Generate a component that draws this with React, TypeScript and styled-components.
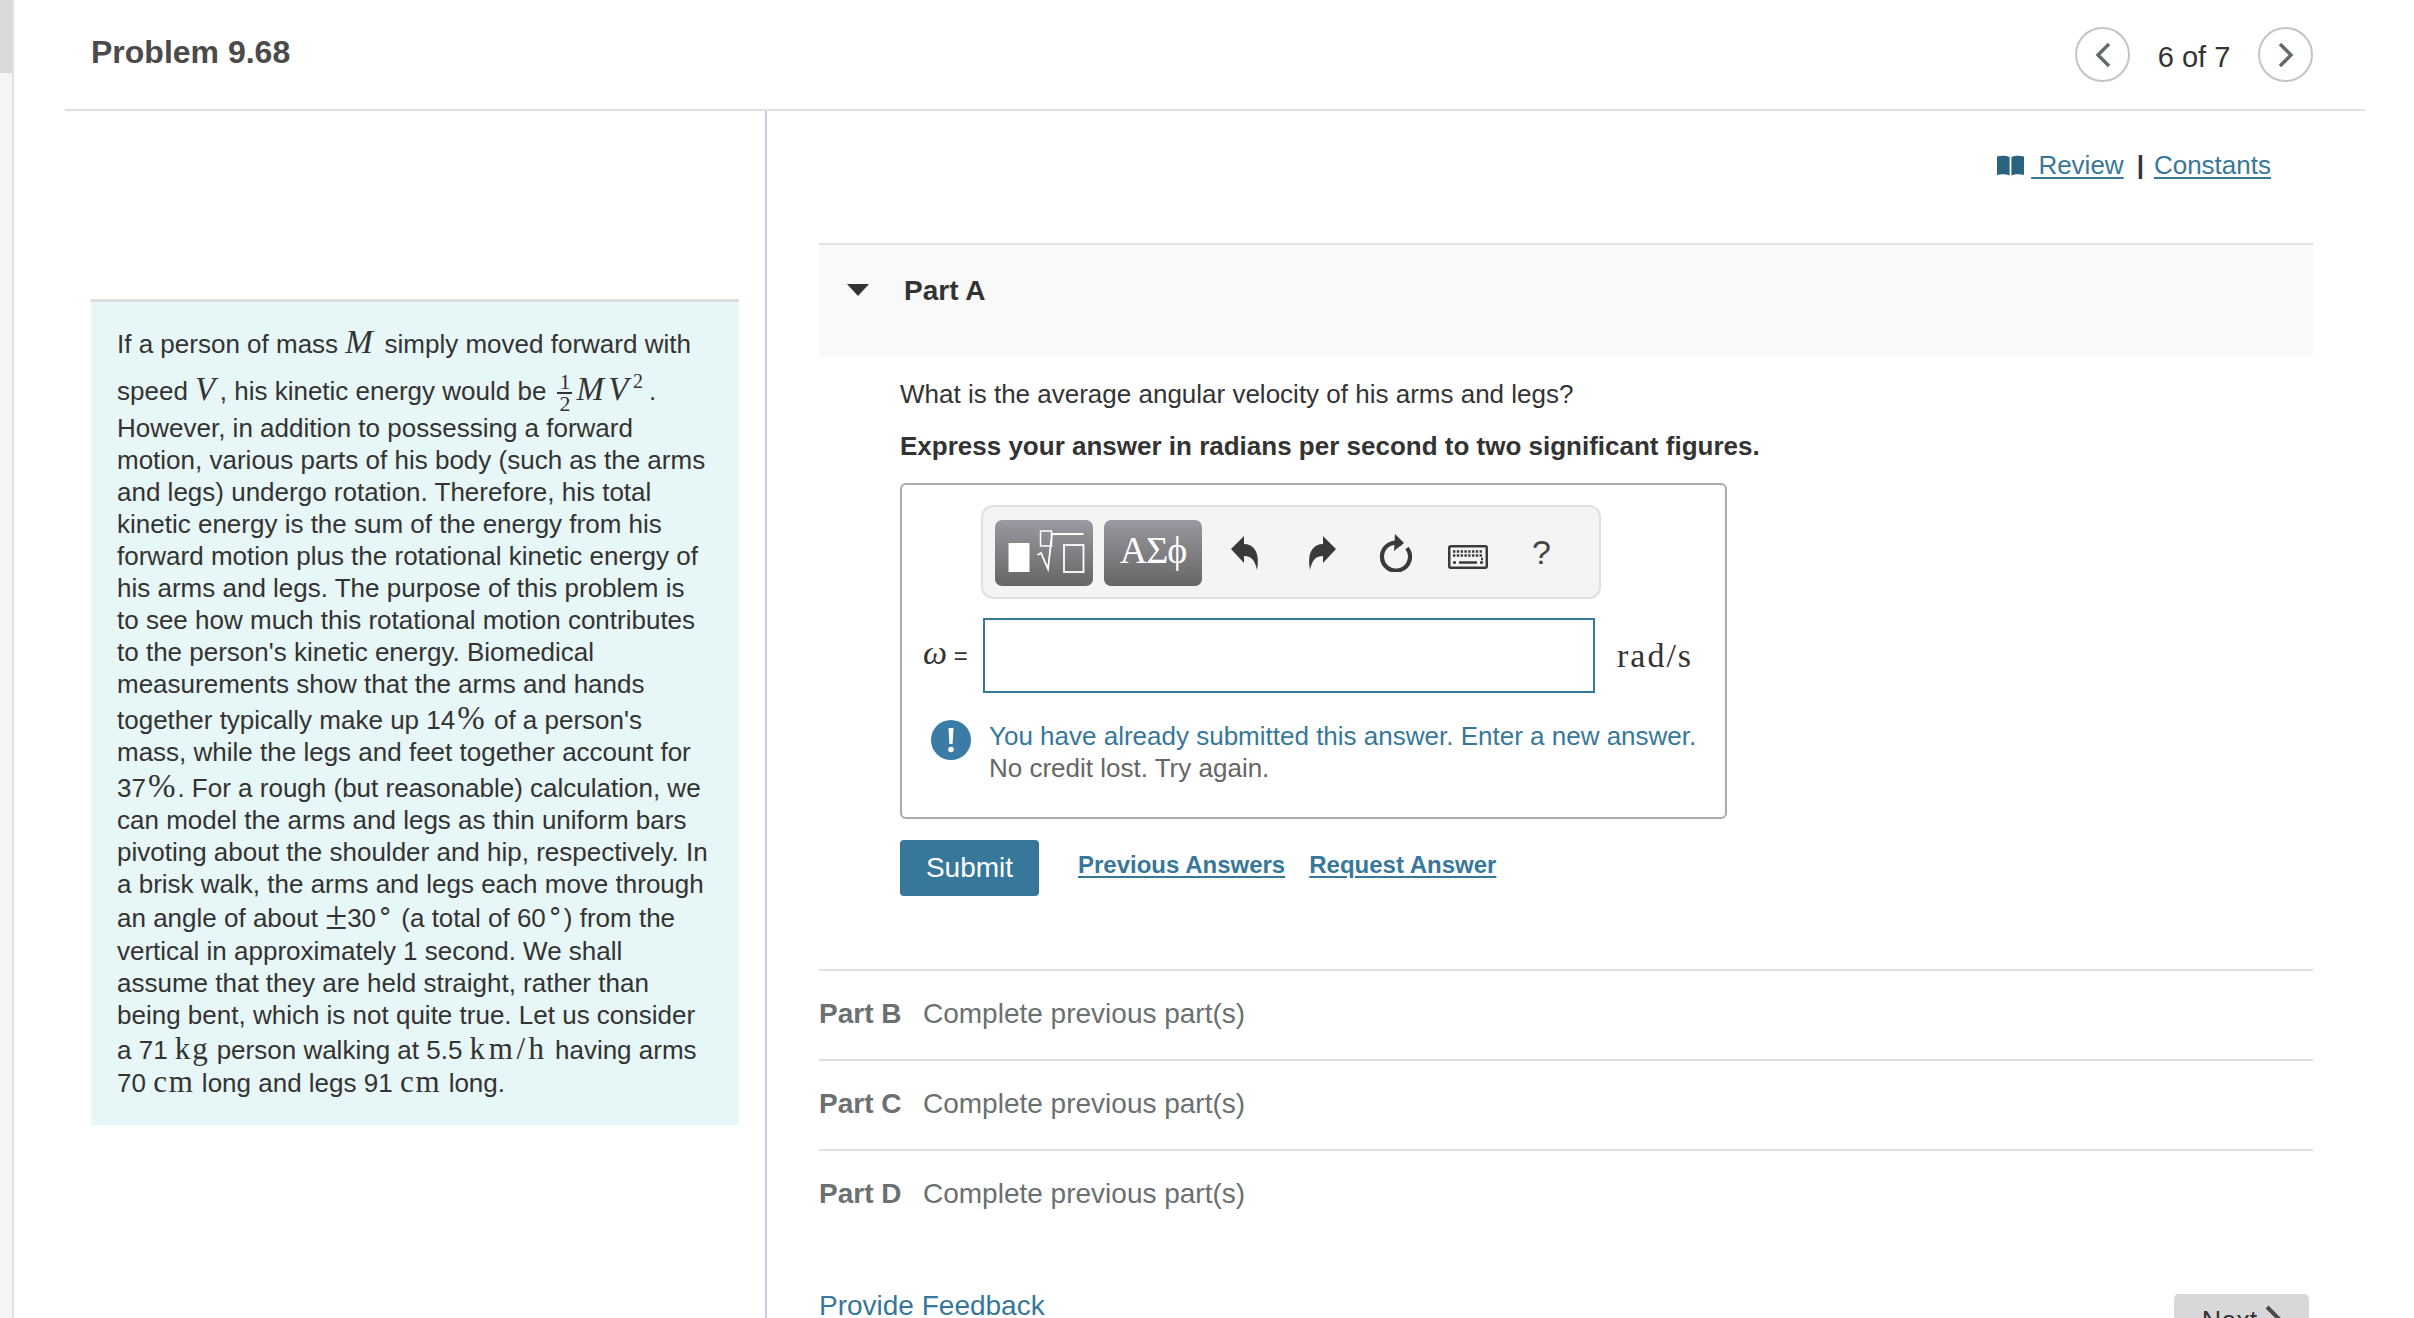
import React from "react";
import styled, { createGlobalStyle } from "styled-components";

const Global = createGlobalStyle`
  html, body { margin: 0; padding: 0; height: 1318px; overflow: hidden; background: #fff; }
  body { font-family: "Liberation Sans", Arial, sans-serif; color: #333; }
  #root { height: 1318px; overflow: hidden; }
`;

const Page = styled.div`display: flex; height: 1318px; overflow: hidden;`;
const Strip = styled.div`
  width: 12px; border-right: 2px solid #e2e2e2; background: #f5f5f5; flex: none;
  &::before { content: ""; display: block; height: 73px; background: #d9d9d9; }
`;
const Main = styled.div`flex: 1; padding: 0 49px 0 51px; min-width: 0;`;
const Header = styled.header`
  height: 109px; border-bottom: 2px solid #e0e0e0; box-sizing: content-box;
  display: flex; align-items: flex-start; justify-content: space-between; padding: 0 52px 0 26px;
`;
const Title = styled.h1`margin: 34px 0 0; font-size: 32px; line-height: 36px; font-weight: 700; color: #4a4a4a;`;
const Pager = styled.div`display: flex; align-items: center; margin-top: 27px; font-size: 29px; color: #333;`;
const PagerCount = styled.span`width: 128px; text-align: center; position: relative; top: 3px;`;
const Circle = styled.div`
  width: 55px; height: 55px; box-sizing: border-box; border: 2px solid #c4c4c4; border-radius: 50%;
  display: flex; align-items: center; justify-content: center;
`;
const Body = styled.div`display: flex; height: 1207px;`;
const LeftCol = styled.div`
  flex: none; border-right: 2px solid #c3d0e0; padding: 188px 0 0 26px; width: 674px;
`;
const Panel = styled.section`
  width: 648px; box-sizing: border-box; background: #e7f6f6; border-top: 3px solid #dedede;
  padding: 26px 0 26px 26px; font-size: 26px; color: #333;
`;
const Line = styled.div<{ $gap?: number }>`
  height: 32px; line-height: 32px; white-space: nowrap; margin-top: ${(p) => p.$gap ?? 0}px;
`;
const MathI = styled.i<{ $sp?: number }>`
  font-family: "Liberation Serif", serif; font-size: 33px; line-height: 0; letter-spacing: ${(p) => p.$sp ?? 2.5}px;
`;
const MathR = styled.span<{ $sp?: number }>`
  font-family: "Liberation Serif", serif; font-size: 31px; line-height: 0; letter-spacing: ${(p) => p.$sp ?? 1.8}px;
`;
const Sup = styled.sup`font-family: "Liberation Serif", serif; font-size: 20px; line-height: 0; vertical-align: 12px; margin-right: 6px;`;
const Degree = styled.sup`font-family: "Liberation Serif", serif; font-size: 26px; line-height: 0; vertical-align: 8px; margin: 0 1px;`;
const Pct = styled.span`font-family: "Liberation Serif", serif; font-size: 33px; line-height: 0; margin: 0 2px;`;
const PlusMinus = styled.span`font-family: "Liberation Serif", serif; font-size: 40px; line-height: 0; font-weight: 400; position: relative; top: 2px;`;
const Frac = styled.span`
  display: inline-flex; flex-direction: column; align-items: center; vertical-align: middle;
  font-family: "Liberation Serif", serif; font-size: 22px; line-height: 20px; margin: 0 4px 0 11px;
  position: relative; top: -1px; height: 40px;
`;
const FracTop = styled.span`border-bottom: 2px solid #333; padding: 0 2px; height: 20px;`;
const FracBottom = styled.span`height: 20px;`;

const RightCol = styled.div`flex: 1; padding: 0 52px; min-width: 0;`;
const TopLinks = styled.div`
  height: 132px; box-sizing: border-box; padding: 38px 42px 0 0; display: flex; justify-content: flex-end;
  align-items: flex-start; font-size: 26px; line-height: 32px;
`;
const Link = styled.a`color: #37779a; text-decoration: underline; text-underline-offset: 3px;`;
const Sep = styled.span`margin: 0 10px 0 13px; color: #333; font-weight: 700;`;
const BookWrap = styled.span`margin-right: 7px; display: flex; align-items: center; height: 32px;`;
const PartHead = styled.div`
  height: 114px; box-sizing: border-box; border-top: 2px solid #e0e0e0; background: #f9f9f9;
  display: flex; padding-left: 28px; align-items: flex-start;
`;
const Caret = styled.span`
  width: 0; height: 0; border-left: 11px solid transparent; border-right: 11px solid transparent;
  border-top: 12px solid #333; margin-top: 39px;
`;
const PartHeadTitle = styled.span`margin: 30px 0 0 35px; font-size: 28px; line-height: 32px; font-weight: 700; color: #333;`;
const PartBody = styled.div`padding-left: 81px;`;
const Para = styled.p<{ $bold?: boolean }>`
  margin: ${(p) => (p.$bold ? 20 : 21)}px 0 0; font-size: 26px; line-height: 32px; color: #333;
  font-weight: ${(p) => (p.$bold ? 700 : 400)};
`;
const AnswerBox = styled.div`
  margin-top: 21px; width: 827px; height: 336px; box-sizing: border-box; border: 2px solid #aaa; border-radius: 6px;
  padding: 20px 21px;
`;
const Toolbar = styled.div`
  margin-left: 58px; width: 620px; height: 94px; box-sizing: border-box; background: #f4f4f4; border: 2px solid #e0e0e0;
  border-radius: 12px; display: flex; align-items: flex-start; padding: 13px 0 0 12px;
`;
const ToolButton = styled.div`
  width: 98px; height: 66px; box-sizing: border-box; border-radius: 7px; margin-right: 11px; flex: none;
  background: linear-gradient(#9b99a1, #656565); display: flex; align-items: center; justify-content: center;
  color: #fff; font-family: "Liberation Serif", serif; font-size: 38px; line-height: 1; letter-spacing: -1px; padding-bottom: 6px;
`;
const RootButton = styled(ToolButton)`padding: 0;`;
const ToolIcon = styled.span<{ $w: number; $mt: number; $ml: number }>`
  display: flex; width: ${(p) => p.$w}px; margin-top: ${(p) => p.$mt}px; margin-left: ${(p) => p.$ml}px; flex: none;
`;
const Help = styled.span`margin: 14px 0 0 44px; font-size: 34px; line-height: 36px; color: #444;`;
const InputRow = styled.div`display: flex; align-items: center; margin-top: 19px;`;
const Omega = styled.span`width: 60px; font-size: 24px; color: #333; flex: none; white-space: nowrap;`;
const OmegaI = styled.i`font-family: "Liberation Serif", serif; font-size: 34px; line-height: 0;`;
const Field = styled.input`
  width: 612px; height: 75px; box-sizing: border-box; border: 2px solid #37779a; border-radius: 0; background: #fff;
  padding: 0 10px; outline: none; flex: none;
`;
const Unit = styled.span`margin-left: 22px; font-family: "Liberation Serif", serif; font-size: 34px; letter-spacing: 2px; color: #333;`;
const Info = styled.div`display: flex; margin: 27px 0 0 8px; gap: 18px;`;
const InfoText = styled.div`font-size: 26px; line-height: 32px; white-space: nowrap;`;
const InfoLine = styled.div<{ $muted?: boolean }>`color: ${(p) => (p.$muted ? "#666" : "#37779a")};`;
const Actions = styled.div`display: flex; margin-top: 21px; align-items: flex-start;`;
const Submit = styled.button`
  width: 139px; height: 56px; border: 0; border-radius: 4px; background: #37779a; color: #fff; padding: 0;
  font: 400 28px "Liberation Sans", Arial, sans-serif;
`;
const ActionLink = styled.a<{ $ml: number }>`
  margin: 9px 0 0 ${(p) => p.$ml}px; font-size: 24px; line-height: 32px; font-weight: 700; color: #37779a;
  text-decoration: underline; text-underline-offset: 3px;
`;
const Spacer = styled.div`height: 73px;`;
const PartRow = styled.div`
  height: 90px; box-sizing: border-box; border-top: 2px solid #e0e0e0; display: flex; align-items: center;
  font-size: 28px; color: #6b7070; padding-bottom: 2px;
`;
const PartName = styled.b`width: 104px; font-weight: 700; flex: none;`;
const Footer = styled.div`display: flex; justify-content: space-between; align-items: flex-start; margin-top: 50px;`;
const Feedback = styled.a`font-size: 28px; line-height: 29px; color: #37779a; padding-top: 2px;`;
const NextBtn = styled.div`
  width: 135px; height: 60px; box-sizing: border-box; margin: 5px 4px 0 0; background: #d8d8d8; border-radius: 5px;
  display: flex; justify-content: center; gap: 8px; padding-top: 11px; font-size: 27px; line-height: 32px; color: #333;
`;

const Chevron = ({ dir }: { dir: "l" | "r" }) => (
  <svg width="16" height="26" viewBox="0 0 16 26">
    <polyline
      points={dir === "l" ? "14,2 3,13 14,24" : "2,2 13,13 2,24"}
      fill="none"
      stroke="#636b6b"
      strokeWidth="3.4"
    />
  </svg>
);

const Book = () => (
  <svg width="27" height="21" viewBox="0 0 27 21">
    <path d="M0 1.5 C4 .5 9 .5 12.6 2 V20.5 C9 19 4 19 0 20 Z M14.4 2 C18 .5 23 .5 27 1.5 V20 C23 19 18 19 14.4 20.5 Z" fill="#2b6480" />
  </svg>
);

const RootIcon = () => (
  <svg width="98" height="66" viewBox="0 0 98 66">
    <rect x="13.5" y="23" width="21" height="29" fill="#fff" />
    <rect x="45.5" y="11" width="11" height="15" fill="none" stroke="#fff" strokeWidth="1.5" />
    <path d="M42.5 35 L46 33 L53 49 L57 14 H88.5" fill="none" stroke="#fff" strokeWidth="1.8" />
    <rect x="69" y="25" width="19.5" height="27" fill="none" stroke="#fff" strokeWidth="1.8" />
  </svg>
);

const Undo = () => (
  <svg width="28" height="38" viewBox="0 0 28 38">
    <path d="M0 15 L13 2 V10 C24 10 29 20 26 36 C24 27 21 22 13 22 V29 Z" fill="#3a3a3a" />
  </svg>
);
const Redo = () => (
  <svg width="28" height="38" viewBox="0 0 28 38">
    <path d="M28 15 L15 2 V10 C4 10 -1 20 2 36 C4 27 7 22 15 22 V29 Z" fill="#3a3a3a" />
  </svg>
);
const Reset = () => (
  <svg width="34" height="38" viewBox="0 0 34 38">
    <path d="M24 10 A14 14 0 1 0 29 14" fill="none" stroke="#3a3a3a" strokeWidth="4.2" />
    <path d="M17 0 L26 9 L16 17 Z" fill="#3a3a3a" />
  </svg>
);
const Keyboard = () => (
  <svg width="40" height="24" viewBox="0 0 40 24">
    <rect x="1.25" y="1.25" width="37.5" height="21.5" rx="1.5" fill="#f4f4f4" stroke="#3a3a3a" strokeWidth="2.5" />
    <path d="M5 6.5 H35 M5 10.5 H35" stroke="#3a3a3a" strokeWidth="2.4" strokeDasharray="2.4 1.4" fill="none" />
    <path d="M5 17.5 H8 M11 17.5 H29 M32 17.5 H35 M33 14 H35" stroke="#3a3a3a" strokeWidth="2.4" fill="none" />
  </svg>
);
const InfoIcon = () => (
  <svg width="40" height="40" viewBox="0 0 40 40">
    <circle cx="20" cy="20" r="20" fill="#3a7ca5" />
    <path d="M17.5 8 H22.5 L21.6 24 H18.4 Z" fill="#fff" />
    <circle cx="20" cy="29.5" r="2.8" fill="#fff" />
  </svg>
);

const parts = ["B", "C", "D"];

export default function App() {
  return (
    <Page>
      <Global />
      <Strip />
      <Main>
        <Header>
          <Title>Problem 9.68</Title>
          <Pager>
            <Circle><Chevron dir="l" /></Circle>
            <PagerCount>6 of 7</PagerCount>
            <Circle><Chevron dir="r" /></Circle>
          </Pager>
        </Header>
        <Body>
          <LeftCol>
            <Panel>
              <Line>If a person of mass <MathI $sp={4.5}>M</MathI> simply moved forward with</Line>
              <Line $gap={13}>
                speed <MathI $sp={4.5}>V</MathI>, his kinetic energy would be
                <Frac><FracTop>1</FracTop><FracBottom>2</FracBottom></Frac>
                <MathI $sp={4.5}>MV</MathI><Sup>2</Sup>.
              </Line>
              <Line $gap={7}>However, in addition to possessing a forward</Line>
              <Line>motion, various parts of his body (such as the arms</Line>
              <Line>and legs) undergo rotation. Therefore, his total</Line>
              <Line>kinetic energy is the sum of the energy from his</Line>
              <Line>forward motion plus the rotational kinetic energy of</Line>
              <Line>his arms and legs. The purpose of this problem is</Line>
              <Line>to see how much this rotational motion contributes</Line>
              <Line>to the person's kinetic energy. Biomedical</Line>
              <Line>measurements show that the arms and hands</Line>
              <Line $gap={4}>together typically make up 14<Pct>%</Pct> of a person's</Line>
              <Line>mass, while the legs and feet together account for</Line>
              <Line $gap={4}>37<Pct>%</Pct>. For a rough (but reasonable) calculation, we</Line>
              <Line>can model the arms and legs as thin uniform bars</Line>
              <Line>pivoting about the shoulder and hip, respectively. In</Line>
              <Line>a brisk walk, the arms and legs each move through</Line>
              <Line $gap={2}>an angle of about <PlusMinus>±</PlusMinus>30<Degree>∘</Degree> (a total of 60<Degree>∘</Degree>) from the</Line>
              <Line $gap={1}>vertical in approximately 1 second. We shall</Line>
              <Line>assume that they are held straight, rather than</Line>
              <Line>being bent, which is not quite true. Let us consider</Line>
              <Line $gap={3}>a 71 <MathR>kg</MathR> person walking at 5.5 <MathR $sp={3.6}>km/h</MathR> having arms</Line>
              <Line $gap={1}>70 <MathR>cm</MathR> long and legs 91 <MathR>cm</MathR> long.</Line>
            </Panel>
          </LeftCol>
          <RightCol>
            <TopLinks>
              <BookWrap><Book /></BookWrap>
              <Link>&nbsp;Review</Link>
              <Sep>|</Sep>
              <Link>Constants</Link>
            </TopLinks>
            <PartHead>
              <Caret />
              <PartHeadTitle>Part A</PartHeadTitle>
            </PartHead>
            <PartBody>
              <Para>What is the average angular velocity of his arms and legs?</Para>
              <Para $bold>Express your answer in radians per second to two significant figures.</Para>
              <AnswerBox>
                <Toolbar>
                  <RootButton><RootIcon /></RootButton>
                  <ToolButton>ΑΣϕ</ToolButton>
                  <ToolIcon $w={28} $mt={14} $ml={18}><Undo /></ToolIcon>
                  <ToolIcon $w={28} $mt={14} $ml={49}><Redo /></ToolIcon>
                  <ToolIcon $w={34} $mt={14} $ml={42}><Reset /></ToolIcon>
                  <ToolIcon $w={40} $mt={25} $ml={36}><Keyboard /></ToolIcon>
                  <Help>?</Help>
                </Toolbar>
                <InputRow>
                  <Omega><OmegaI>ω</OmegaI> =</Omega>
                  <Field aria-label="omega" />
                  <Unit>rad/s</Unit>
                </InputRow>
                <Info>
                  <InfoIcon />
                  <InfoText>
                    <InfoLine>You have already submitted this answer. Enter a new answer.</InfoLine>
                    <InfoLine $muted>No credit lost. Try again.</InfoLine>
                  </InfoText>
                </Info>
              </AnswerBox>
              <Actions>
                <Submit>Submit</Submit>
                <ActionLink $ml={39}>Previous Answers</ActionLink>
                <ActionLink $ml={24}>Request Answer</ActionLink>
              </Actions>
            </PartBody>
            <Spacer />
            {parts.map((p) => (
              <PartRow key={p}>
                <PartName>Part {p}</PartName>
                <span>Complete previous part(s)</span>
              </PartRow>
            ))}
            <Footer>
              <Feedback>Provide Feedback</Feedback>
              <NextBtn>
                Next
                <svg width="16" height="26" viewBox="0 0 16 26">
                  <polyline points="2,2 13,13 2,24" fill="none" stroke="#4a4a4a" strokeWidth="4" />
                </svg>
              </NextBtn>
            </Footer>
          </RightCol>
        </Body>
      </Main>
    </Page>
  );
}
